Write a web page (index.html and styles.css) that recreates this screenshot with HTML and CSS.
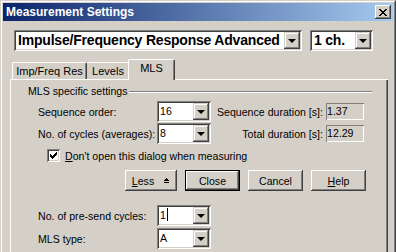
FILE: index.html
```html
<!DOCTYPE html>
<html lang="en">
<head>
	<meta charset="UTF-8">
	<title>Measurement Settings</title>
	<link rel="stylesheet" href="styles.css">
</head>
<body>
<div class="window">
	<div class="frame">
		<div class="titlebar">
			<span class="title">Measurement Settings</span>
			<span class="close-btn">
				<svg width="8" height="7" viewBox="0 0 8 7" shape-rendering="crispEdges">
					<path d="M0 0h2v1h-2zM6 0h2v1h-2zM1 1h2v1h-2zM5 1h2v1h-2zM2 2h4v1h-4zM3 3h2v1h-2zM2 4h4v1h-4zM1 5h2v1h-2zM5 5h2v1h-2zM0 6h2v1h-2zM6 6h2v1h-2z" fill="#000"/>
				</svg>
			</span>
		</div>

		<div class="client">
			<div class="top-row">
				<div class="combo combo-big">
					<span class="combo-value">Impulse/Frequency Response Advanced</span>
					<span class="combo-btn"><i class="arrow"></i></span>
				</div>
				<div class="combo combo-big combo-ch">
					<span class="combo-value">1 ch.</span>
					<span class="combo-btn"><i class="arrow"></i></span>
				</div>
			</div>

			<div class="tabs">
				<span class="tab tab-imp">Imp/Freq Res</span>
				<span class="tab tab-levels">Levels</span>
				<span class="tab tab-active">MLS</span>
			</div>

			<div class="panel">
				<div class="group-title">
					<span>MLS specific settings</span>
					<span class="etch"></span>
				</div>

				<div class="grid">
					<span>Sequence order:</span>
					<div class="combo">
						<span class="combo-value">16</span>
						<span class="combo-btn"><i class="arrow"></i></span>
					</div>
					<span class="label-r">Sequence duration [s]:</span>
					<span class="field">1.37</span>

					<span>No. of cycles (averages):</span>
					<div class="combo">
						<span class="combo-value">8</span>
						<span class="combo-btn"><i class="arrow"></i></span>
					</div>
					<span class="label-r">Total duration [s]:</span>
					<span class="field">12.29</span>
				</div>

				<div class="check-row">
					<span class="checkbox">
						<svg width="7" height="7" viewBox="0 0 7 7" shape-rendering="crispEdges">
							<path d="M6 0h1v3h-1zM5 1h1v3h-1zM4 2h1v3h-1zM3 3h1v3h-1zM2 4h1v3h-1zM1 3h1v3h-1zM0 2h1v3h-1z" fill="#000"/>
						</svg>
					</span>
					<span><u>D</u>on't open this dialog when measuring</span>
				</div>

				<div class="buttons">
					<span class="btn btn-less">
						<span><u>L</u>ess</span>
						<svg width="7" height="6" viewBox="0 0 7 6" shape-rendering="crispEdges">
							<path d="M3 0h1v1h-1zM2 1h3v1h-3zM1 2h5v1h-5zM1 4h5v1h-5z" fill="#000"/>
						</svg>
					</span>
					<span class="btn btn-default">Close</span>
					<span class="btn">Cancel</span>
					<span class="btn"><span><u>H</u>elp</span></span>
				</div>

				<div class="grid grid-extra">
					<span>No. of pre-send cycles:</span>
					<div class="combo">
						<span class="combo-value">1<i class="caret"></i></span>
						<span class="combo-btn"><i class="arrow"></i></span>
					</div>

					<span>MLS type:</span>
					<div class="combo">
						<span class="combo-value">A</span>
						<span class="combo-btn"><i class="arrow"></i></span>
					</div>
				</div>
			</div>
		</div>
	</div>
</div>
</body>
</html>
```

FILE: styles.css
```css
*{
	margin:0;
	padding:0;
}

body{
	background:#d4d0c8;
	font-family:"Liberation Sans", Arial, sans-serif;
	font-size:10.6px;
	color:#000;
}

.window{
	width:396px;
	height:252px;
	box-sizing:border-box;
	border:1px solid #d4d0c8;
	border-right-color:#404040;
	border-bottom:none;
	overflow:hidden;
}

.frame{
	height:100%;
	box-sizing:border-box;
	border:1px solid #fff;
	border-right-color:#808080;
	border-bottom:none;
	padding:1px 1px 0;
}

/* caption */
.titlebar{
	height:18px;
	display:flex;
	align-items:center;
	justify-content:space-between;
	padding:0 2px 0 3px;
	background:linear-gradient(to right, #0a246a, #a6caf0);
	color:#fff;
	font-weight:bold;
	font-size:12px;
}

.close-btn{
	width:16px;
	height:14px;
	display:flex;
	align-items:center;
	justify-content:center;
	background:#d4d0c8;
	box-shadow:inset -1px -1px #404040, inset 1px 1px #fff, inset -2px -2px #808080;
}

/* 3d controls */
.combo{
	display:flex;
	height:21px;
	box-sizing:border-box;
	padding:2px;
	background:#fff;
	box-shadow:inset 1px 1px #808080, inset -1px -1px #fff, inset 2px 2px #404040, inset -2px -2px #d4d0c8;
}

.combo-value{
	flex:1;
	padding-left:1px;
	line-height:17px;
	white-space:nowrap;
	overflow:hidden;
}

.combo-btn{
	width:16px;
	height:17px;
	display:flex;
	align-items:center;
	justify-content:center;
	background:#d4d0c8;
	box-shadow:inset -1px -1px #404040, inset 1px 1px #d4d0c8, inset -2px -2px #808080, inset 2px 2px #fff;
}

.arrow{
	width:0;
	height:0;
	border-top:4px solid #000;
	border-left:4px solid transparent;
	border-right:4px solid transparent;
	margin-top:1px;
}

.caret{
	display:inline-block;
	width:1px;
	height:13px;
	background:#000;
	vertical-align:-2px;
	margin-left:1px;
}

.top-row{
	display:flex;
	gap:8px;
	margin:9px 0 0 11px;
}

.combo-big{
	width:288px;
}

.combo-big .combo-value{
	font-size:14px;
	font-weight:bold;
	letter-spacing:-0.2px;
	padding-left:2px;
}

.combo-ch{
	width:63px;
}

/* tabs */
.tabs{
	display:flex;
	align-items:flex-end;
	height:19px;
	margin:9px 0 0 7px;
	padding-left:2px;
}

.tab{
	height:17px;
	box-sizing:border-box;
	text-align:center;
	line-height:16px;
	font-size:11px;
	border-top:1px solid #fff;
	border-left:1px solid #fff;
	border-right:1px solid #404040;
	border-radius:2px 2px 0 0;
	box-shadow:inset -1px 0 #808080;
}

.tab-imp{
	width:75px;
}

.tab-levels{
	width:43px;
	border-left:none;
}

.tab-active{
	position:relative;
	z-index:1;
	width:47px;
	height:21px;
	margin:0 0 -1px -2px;
	background:#d4d0c8;
	line-height:17px;
}

.panel{
	width:378px;
	height:180px;
	margin-left:7px;
	box-sizing:border-box;
	padding:6px 16px 0 18px;
	box-shadow:inset 1px 1px #fff, inset -1px -1px #404040, inset -2px -2px #808080;
}

.group-title{
	display:flex;
	align-items:center;
	gap:1px;
	line-height:13px;
}

.etch{
	flex:1;
	height:0;
	border-top:1px solid #808080;
	border-bottom:1px solid #fff;
}

.grid{
	display:grid;
	grid-template-columns:119px 54px 115px 38px;
	grid-auto-rows:21px;
	row-gap:1px;
	align-items:center;
	margin:3px 0 0 10px;
	white-space:nowrap;
}

.grid-extra{
	grid-template-columns:119px 54px;
	row-gap:2px;
	margin-top:14px;
}

.label-r{
	text-align:right;
	padding-right:3px;
}

.field{
	height:17px;
	line-height:17px;
	padding-left:1px;
	box-shadow:inset 1px 1px #808080, inset -1px -1px #fff;
}

.check-row{
	display:flex;
	align-items:center;
	gap:5px;
	height:13px;
	margin-top:5px;
	padding-left:19px;
}

.checkbox{
	width:13px;
	height:13px;
	box-sizing:border-box;
	display:flex;
	align-items:center;
	justify-content:center;
	background:#fff;
	box-shadow:inset 1px 1px #808080, inset -1px -1px #fff, inset 2px 2px #404040, inset -2px -2px #d4d0c8;
}

.buttons{
	display:flex;
	gap:8px;
	margin-top:8px;
	padding-left:97px;
}

.btn{
	width:55px;
	height:21px;
	box-sizing:border-box;
	display:flex;
	align-items:center;
	justify-content:center;
	gap:9px;
	background:#d4d0c8;
	box-shadow:inset -1px -1px #404040, inset 1px 1px #fff, inset -2px -2px #808080;
}

.btn-less{
	width:52px;
}

.btn-default{
	border:1px solid #000;
}
```
